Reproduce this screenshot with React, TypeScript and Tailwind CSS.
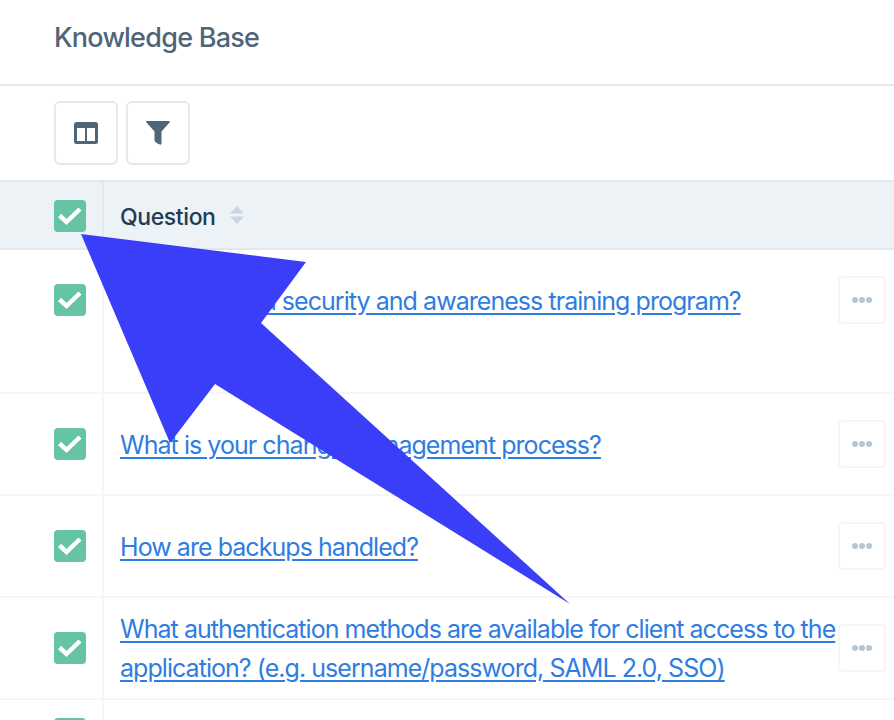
const rows = [
  { h: "h-[144px]", top: "pt-[32px]", cb: "pt-[34px]", lines: ["Do you have a security and awareness training program?"] },
  { h: "h-[102px]", top: "pt-[32px]", cb: "pt-[34px]", lines: ["What is your change management process?"] },
  { h: "h-[102px]", top: "pt-[32px]", cb: "pt-[34px]", lines: ["How are backups handled?"] },
  { h: "h-[102px]", top: "pt-[12px]", cb: "pt-[34px]", lines: ["What authentication methods are available for client access to the", "application? (e.g. username/password, SAML 2.0, SSO)"] },
  { h: "h-[102px]", top: "pt-[34px]", cb: "pt-[18px]", lines: [] },
];

function Check() {
  return (
    <div className="w-8 h-8 rounded-[4px] bg-[#64c4a3] flex items-center justify-center shrink-0">
      <svg width="32" height="32" viewBox="0 0 32 32" fill="none">
        <path d="M5.5 15.5 L12.5 22 L26 9" stroke="#fff" strokeWidth="4.5" />
      </svg>
    </div>
  );
}

export default function App() {
  return (
    <div className="relative w-[894px] h-[720px] overflow-hidden bg-white font-['Inter','Liberation_Sans',sans-serif]">
      <header className="h-[86px] border-b-2 border-[#e2e8ee] pl-[54px] pt-[21px]">
        <h1 className="text-[27px] leading-[34px] font-medium tracking-[-0.75px] text-[#4f6578]">Knowledge Base</h1>
      </header>

      <div className="h-[94px] pl-[54px] pt-[15px] flex gap-2 items-start">
        <button className="w-16 h-16 rounded-[6px] border-2 border-[#e2e8ee] bg-white flex items-center justify-center">
          <svg width="24" height="22" viewBox="0 0 24 22">
            <rect width="24" height="22" rx="2.5" fill="#4f6578" />
            <rect x="3" y="6" width="8" height="13" fill="#fff" />
            <rect x="13" y="6" width="8" height="13" fill="#fff" />
          </svg>
        </button>
        <button className="w-16 h-16 rounded-[6px] border-2 border-[#e2e8ee] bg-white flex items-center justify-center">
          <svg width="24" height="24" viewBox="0 0 24 24" fill="#4f6578">
            <path d="M1 0 H23 Q24.5 0 23.5 1.5 L15.5 10.5 V22.5 Q15.5 24 14 23.5 L12 22.8 Q8.5 21 8.5 19.5 V10.5 L0.5 1.5 Q-0.5 0 1 0 Z" />
          </svg>
        </button>
      </div>

      <div className="h-[70px] bg-[#edf2f7] border-y-2 border-[#e2e8ee] flex">
        <div className="w-[104px] shrink-0 border-r-2 border-[#e2e8ee] pl-[54px] pt-[18px]">
          <Check />
        </div>
        <div className="pl-4 pt-[4px] flex items-center gap-[14px]">
          <span className="text-[23px] font-medium tracking-[-0.4px] text-[#243b4f]">Question</span>
          <svg width="14" height="18" viewBox="0 0 14 18" fill="#cbd5e0" className="-mt-[4px]">
            <path d="M7 0 L14 7.5 H0 Z M7 18 L14 10.5 H0 Z" />
          </svg>
        </div>
      </div>

      {rows.map((r, i) => (
        <div key={i} className={`${r.h} border-b-2 border-[#f5f6f8] flex`}>
          <div className={`w-[104px] shrink-0 border-r-2 border-[#f5f6f8] pl-[54px] ${r.cb}`}>
            <Check />
          </div>
          <div className={`flex-1 pl-4 ${r.top} min-w-0`}>
            {r.lines.map((l) => (
              <div key={l} className="text-[25px] leading-[39px] tracking-[-0.95px] text-[#2f7de1] underline underline-offset-[3px] whitespace-nowrap">{l}</div>
            ))}
          </div>
          <div className="w-[56px] shrink-0 pt-[26px]">
            <button className="w-12 h-12 rounded-[4px] border-2 border-[#f5f6f8] bg-white flex items-center justify-center gap-[1px]">
              <span className="w-[6px] h-[6px] rounded-full bg-[#b8c6d2]" />
              <span className="w-[6px] h-[6px] rounded-full bg-[#b8c6d2]" />
              <span className="w-[6px] h-[6px] rounded-full bg-[#b8c6d2]" />
            </button>
          </div>
        </div>
      ))}

      <svg className="absolute left-0 top-0 pointer-events-none" width="894" height="720" viewBox="0 0 894 720">
        <polygon points="81,234 306,262 261,323 570,604 215,384 170,443" fill="#3a3ef8" />
      </svg>
    </div>
  );
}
